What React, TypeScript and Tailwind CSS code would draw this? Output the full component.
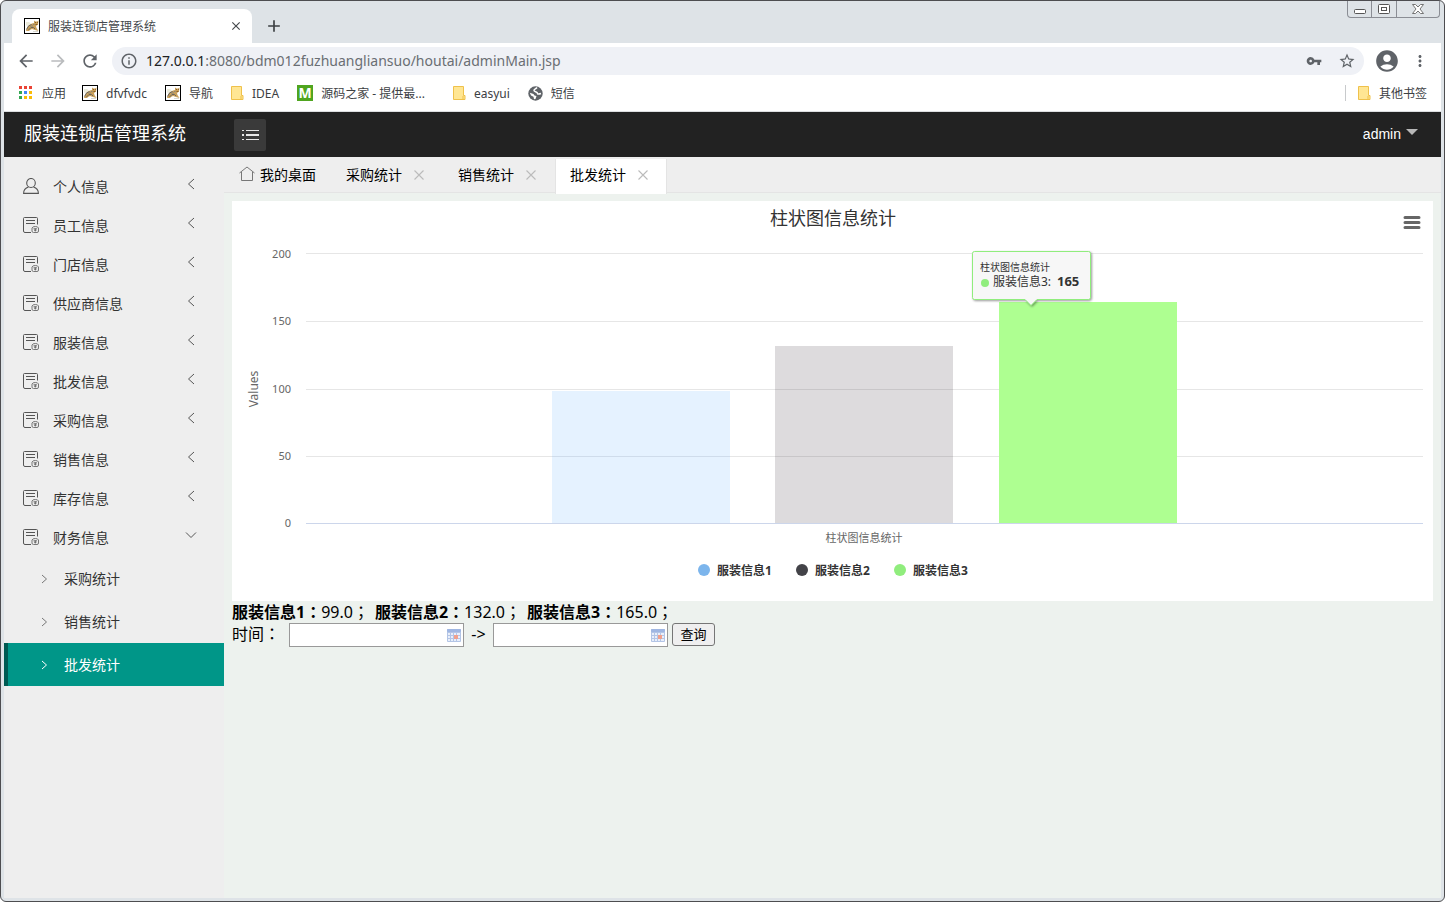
import React, { useState } from 'react';
import {
  MdArrowBack,
  MdArrowForward,
  MdRefresh,
  MdInfoOutline,
  MdVpnKey,
  MdStarBorder,
  MdAccountCircle,
  MdMoreVert,
  MdClose,
  MdAdd,
} from 'react-icons/md';

const menus = ['个人信息', '员工信息', '门店信息', '供应商信息', '服装信息', '批发信息', '采购信息', '销售信息', '库存信息', '财务信息'];

const subMenus = ['采购统计', '销售统计', '批发统计'];

const tabs = ['采购统计', '销售统计', '批发统计'];

const series = [
  { name: '服装信息1', value: 99, color: '#7cb5ec', fill: '#e5f2ff', x: 320 },
  { name: '服装信息2', value: 132, color: '#434348', fill: '#dddbdd', x: 543 },
  { name: '服装信息3', value: 165, color: '#90ed7d', fill: '#aeff91', x: 767 },
];

const ticks = [
  { label: '200', y: 52 },
  { label: '150', y: 120 },
  { label: '100', y: 188 },
  { label: '50', y: 255 },
];

const appColors = [
  '#ea4335', '#ea4335', '#ea4335',
  '#34a853', '#4285f4', '#fbbc05',
  '#34a853', '#fbbc05', '#fbbc05',
];

/* ---------- icons ---------- */

const TomcatIcon = () => (
  <svg width="16" height="16" viewBox="0 0 16 16" className="shrink-0">
    <rect x="0.5" y="0.5" width="15" height="15" fill="#fff" stroke="#000" />
    <path d="M2 4 H5 L7 5.5 L4 8 L2 7.5 Z" fill="#ececdc" />
    <path d="M2 13 L3 10 L5 7 L8 5.5 L10 5 L10 2.5 L11.5 3.5 L13 3.5 L14.5 2.5 L14 6.5 L12 8 L12.5 10 L14.5 13 L11 12 L8 11 L6 12 L5 13 Z" fill="#c9a05a" />
    <path d="M2.5 11.5 L4.5 8 L7.5 6.5 M4.5 12 L7 9.5 L9.5 9.5 L11 11" stroke="#6b655c" fill="none" />
    <path d="M6 8 H9 M9 6.5 H10.5" stroke="#8b8578" />
    <path d="M11 4.5 h1 M13 4.5 h0.8 M11.5 6.5 h2" stroke="#7a4b12" strokeWidth="0.8" />
    <path d="M9 13.5 H14" stroke="#d8d8d0" />
  </svg>
);

const FolderIcon = () => (
  <svg width="13" height="15" viewBox="0 0 13 15" className="shrink-0">
    <path d="M0.5 0.5 H10.5 V9.5 H12 V13.5 H0.5 Z" fill="#ffe693" stroke="#efc14b" />
    <path d="M10 13.5 V10" stroke="#efc14b" />
  </svg>
);

const GlobeIcon = () => (
  <svg width="15" height="15" viewBox="0 0 15 15" className="shrink-0">
    <circle cx="7.5" cy="7.5" r="7.2" fill="#5f6368" />
    <path d="M9 1.5 C8 3 6 3 6 4.5 C6 6 9.5 5.5 9.5 7.5 C9.5 8.5 11.5 8 13 7.5" fill="none" stroke="#fff" strokeWidth="1.5" />
    <path d="M1.8 6.8 L5.5 8 L6.5 9.5 L8.5 10 L7.5 13 L6 13.2 L5.5 10.8 L3 9.5 Z" fill="#fff" />
  </svg>
);

const UserIcon = () => (
  <svg width="16" height="16" viewBox="0 0 16 16" fill="none" stroke="#555" strokeWidth="1.1">
    <ellipse cx="8" cy="5" rx="4.3" ry="4.5" />
    <path d="M5.5 9 C2.5 10 0.6 12.5 0.6 15.4 H15.4 C15.4 12.5 13.5 10 10.5 9" />
  </svg>
);

const FormIcon = () => (
  <svg width="16" height="16" viewBox="0 0 16 16" fill="none" stroke="#555">
    <path d="M14.5 7.5 V1.5 Q14.5 0.5 13.5 0.5 H1.5 Q0.5 0.5 0.5 1.5 V14 Q0.5 15.5 2 15.5 H8" />
    <path d="M3 3.5 H12 M3 6.5 H12" />
    <path d="M9 11 Q9.5 9.5 12.3 9.5 Q15 9.5 15.5 11 V14 Q15.5 15.5 14 15.5 H10.5 Q9 15.5 9 14 Z" stroke="#777" />
    <path d="M10.5 11.8 H14 M11 13.2 H13.5 M12.3 11.5 V14.5" strokeWidth="0.8" />
  </svg>
);

const HomeIcon = () => (
  <svg width="16" height="16" viewBox="0 0 16 16" fill="none" stroke="#777">
    <path d="M0.5 7 L8 1 L15.5 7 M2.5 6 V14.5 H13.5 V6" />
  </svg>
);

const Chevron: React.FC<{ d: string; color?: string }> = ({ d, color = '#555' }) => (
  <svg width="12" height="12" viewBox="0 0 12 12" fill="none" stroke={color} className="shrink-0">
    <path d={d} />
  </svg>
);

const CalendarIcon = () => (
  <svg width="14" height="13" viewBox="0 0 14 13" className="shrink-0">
    <rect width="14" height="13" rx="1" fill="#b3c5e6" />
    <rect width="14" height="3" rx="1" fill="#9fb6e2" />
    <path d="M1 4h2v2H1z M4 4h2v2H4z M7 4h2v2H7z M10 4h3v2h-3z M1 7h2v2H1z M4 7h2v2H4z M10 7h3v2h-3z M1 10h2v2H1z M4 10h2v2H4z M7 10h2v2H7z M10 10h3v2h-3z" fill="#e9effa" />
    <rect x="7" y="6" width="4" height="4" fill="#f0a08c" />
  </svg>
);

/* ---------- browser ---------- */

const WindowButtons = () => (
  <div className="flex h-[17px] mr-px border border-t-0 border-[#8a8d94] rounded-b divide-x divide-[#8a8d94]">
    <button aria-label="Minimize" className="w-6 flex justify-center items-center">
      <svg width="12" height="12" viewBox="0 0 12 12"><rect x="0.5" y="6.5" width="11" height="4" rx="1" fill="#fff" stroke="#555" /></svg>
    </button>
    <button aria-label="Maximize" className="w-[25px] flex justify-center items-center">
      <svg width="12" height="10" viewBox="0 0 12 10" fill="#fff" stroke="#555"><rect x="0.5" y="0.5" width="11" height="9" rx="1" /><rect x="3.5" y="3.5" width="5" height="3" /></svg>
    </button>
    <button aria-label="Close" className="w-[42px] flex justify-center items-center">
      <svg width="12" height="10" viewBox="0 0 12 10" fill="#fff" stroke="#666" strokeWidth="0.9">
        <path d="M0.5 0.5 H3.5 L6 3 L8.5 0.5 H11.5 L8 5 L11.5 9.5 H8.5 L6 7 L3.5 9.5 H0.5 L4 5 Z" />
      </svg>
    </button>
  </div>
);

const TabStrip = () => (
  <div className="flex items-start justify-between h-[42px] pl-2">
    <div className="flex items-center mt-2">
      <div className="flex items-center w-60 h-[34px] px-3 bg-white rounded-t-lg">
        <TomcatIcon />
        <span className="ml-2 pt-[2px] text-xs text-[#45494d]">服装连锁店管理系统</span>
        <button aria-label="Close tab" className="ml-auto -mr-[3px] text-[#45494d]"><MdClose size={14} /></button>
      </div>
      <button aria-label="New tab" className="ml-3 text-[#3c4043]"><MdAdd size={20} /></button>
    </div>
    <WindowButtons />
  </div>
);

const Toolbar = () => (
  <div className="flex items-center h-9 pl-3 pr-3 bg-white text-[#5f6368]">
    <button aria-label="Back"><MdArrowBack size={20} /></button>
    <button aria-label="Forward" className="ml-3 text-[#babcbe]"><MdArrowForward size={20} /></button>
    <button aria-label="Reload" className="ml-3"><MdRefresh size={20} /></button>
    <div className="flex items-center flex-1 h-7 ml-3 px-2 bg-[#eff1f6] rounded-full">
      <MdInfoOutline size={18} />
      <div className="flex-1 ml-2 text-sm text-[#6a6e73]">
        <span className="text-[#202124]">127.0.0.1</span>:8080/bdm012fuzhuangliansuo/houtai/adminMain.jsp
      </div>
      <button aria-label="Passwords"><MdVpnKey size={16} /></button>
      <button aria-label="Bookmark" className="ml-4"><MdStarBorder size={18} /></button>
    </div>
    <button aria-label="Profile" className="ml-[10px]"><MdAccountCircle size={26} /></button>
    <button aria-label="Menu" className="ml-[11px]"><MdMoreVert size={18} /></button>
  </div>
);

const Bookmark: React.FC<{ icon: React.ReactNode; label: string; className?: string }> = ({ icon, label, className = '' }) => (
  <a href="#" className={`flex items-center gap-2 whitespace-nowrap ${className}`}>
    {icon}
    <span className="pt-[2px]">{label}</span>
  </a>
);

const BookmarkBar = () => (
  <nav className="flex items-center h-[33px] px-[14px] pb-1 bg-white border-b border-[#dcdee0] text-xs text-[#3c4043]">
    <Bookmark
      label="应用"
      icon={
        <svg width="16" height="16" viewBox="0 0 16 16" className="shrink-0">
          {appColors.map((c, i) => (
            <rect key={i} x={1 + (i % 3) * 5} y={1 + Math.floor(i / 3) * 5} width="3" height="3" fill={c} />
          ))}
        </svg>
      }
    />
    <Bookmark className="ml-4" icon={<TomcatIcon />} label="dfvfvdc" />
    <Bookmark className="ml-[18px]" icon={<TomcatIcon />} label="导航" />
    <Bookmark className="ml-[18px]" icon={<FolderIcon />} label="IDEA" />
    <Bookmark
      className="ml-[18px]"
      icon={<span className="w-4 h-4 bg-[#4fa51f] text-white text-sm leading-4 font-bold text-center">M</span>}
      label="源码之家 - 提供最..."
    />
    <Bookmark className="ml-7" icon={<FolderIcon />} label="easyui" />
    <Bookmark className="ml-[18px]" icon={<GlobeIcon />} label="短信" />
    <div className="ml-auto w-px h-4 bg-[#c8cacc]"></div>
    <Bookmark className="ml-3" icon={<FolderIcon />} label="其他书签" />
  </nav>
);

/* ---------- admin page ---------- */

const Header = () => (
  <header className="flex items-center h-[45px] pl-5 pr-[23px] bg-[#222] text-white">
    <h1 className="w-[210px] pb-1 text-lg leading-none">服装连锁店管理系统</h1>
    <button aria-label="Toggle menu" className="flex items-center justify-center w-8 h-8 bg-[#3a3a3a] rounded-xs">
      <svg width="18" height="12" viewBox="0 0 18 12" stroke="#e8e8e8">
        <path d="M1 1.5 H3 M5 1.5 H18 M1 10.5 H3 M5 10.5 H18" />
        <path d="M1 6 H3 M5 6 H18" strokeWidth="2" />
      </svg>
    </button>
    <button className="flex items-center gap-[5px] ml-auto pb-[2px] font-['Liberation_Sans',sans-serif] text-sm">
      admin
      <span className="mb-1 border-x-6 border-x-transparent border-t-6 border-t-[#b8b8b8]"></span>
    </button>
  </header>
);

const Sidebar = () => {
  const [current, setCurrent] = useState('批发统计');

  return (
    <aside className="w-[220px] shrink-0 pt-[10px] bg-[#eee] text-sm text-[#333]">
      {menus.map((item, i) => (
        <button key={item} className="flex items-center w-full h-[39px] pl-[19px] pr-[27px]">
          <span className="mb-[2px]">{i === 0 ? <UserIcon /> : <FormIcon />}</span>
          <span className="ml-[14px] mr-auto">{item}</span>
          <span className="mb-[6px]">
            <Chevron d={i === menus.length - 1 ? 'M1 3.5 L6 8.5 L11 3.5' : 'M9 1 L3.5 6 L9 11'} />
          </span>
        </button>
      ))}
      {subMenus.map((item) => (
        <button
          key={item}
          onClick={() => setCurrent(item)}
          className={`flex items-center w-full h-[43px] pl-[30px] gap-[14px] border-l-4 ${
            item === current ? 'bg-[#009688] border-[#005a52] text-white' : 'border-transparent'
          }`}
        >
          <Chevron d="M4 2 L8.5 6 L4 10" color={item === current ? '#fff' : '#777'} />
          {item}
        </button>
      ))}
    </aside>
  );
};

const TabBar = () => (
  <div className="flex h-9 pt-[2px] bg-[#eee] border-b border-[#e4e4e4] text-sm text-black">
    <button className="flex items-center gap-[5px] h-8 px-[15px]">
      <span className="pb-[2px]"><HomeIcon /></span>
      我的桌面
    </button>
    {tabs.map((tab, i) => (
      <div
        key={tab}
        className={`flex items-center w-28 px-[14px] border-x ${
          i === 2 ? 'h-[35px] pb-[3px] bg-white border-[#e4e4e4]' : 'h-8 border-transparent'
        }`}
      >
        <button>{tab}</button>
        <button aria-label={`关闭 ${tab}`} className="ml-3">
          <svg width="10" height="10" viewBox="0 0 10 10" stroke="#bbb" strokeWidth="1.1"><path d="M0.5 0.5 L9.5 9.5 M9.5 0.5 L0.5 9.5" /></svg>
        </button>
      </div>
    ))}
  </div>
);

const Chart = () => {
  // 0..200 maps onto 270px of plot height, columns have a white edge on top
  const top = (value: number) => Math.floor(324 - (value / 200) * 270);

  return (
    <section className="bg-white">
      <svg viewBox="0 0 1201 400" className="block w-full h-auto" role="img" aria-label="柱状图信息统计">
        <text x="601" y="24" textAnchor="middle" fontSize="18" fill="#333">柱状图信息统计</text>
        <path d="M1173 16.5 H1187 M1173 21.5 H1187 M1173 26.5 H1187" stroke="#666" strokeWidth="3" strokeLinecap="round" />

        {ticks.map((t) => (
          <g key={t.label}>
            <path d={`M74 ${t.y + 0.5} H1191`} stroke="#e6e6e6" />
            <text x="59" y={t.label === '200' ? 57 : t.y + 4} textAnchor="end" fontSize="11" fill="#666">{t.label}</text>
          </g>
        ))}
        <text x="59" y="326" textAnchor="end" fontSize="11" fill="#666">0</text>
        <text transform="translate(26 188) rotate(-90)" textAnchor="middle" fontSize="12" fill="#666">Values</text>

        {series.map((s) => (
          <rect key={s.name} x={s.x} y={top(s.value)} width="178" height={322 - top(s.value)} fill={s.fill} />
        ))}
        {/* grid lines stay visible through the dimmed columns */}
        <path d="M543 188.5 H721 M543 255.5 H721" stroke="#c8c6c8" />
        <path d="M320 255.5 H498" stroke="#cfdceb" />
        <path d="M74 322.5 H1191" stroke="#ccd6eb" />
        <text x="632" y="341" textAnchor="middle" fontSize="11" fill="#666">柱状图信息统计</text>

        {series.map((s, i) => (
          <g key={s.name}>
            <circle cx={472 + i * 98} cy="369" r="6" fill={s.color} />
            <text x={485 + i * 98} y="374" fontSize="12" fontWeight="bold" fill="#333">{s.name}</text>
          </g>
        ))}

        {/* tooltip */}
        <path
          d="M742.5 50.5 H856.5 Q858.5 50.5 858.5 52.5 V96.5 Q858.5 98.5 856.5 98.5 H805 L799 104.5 L793 98.5 H742.5 Q740.5 98.5 740.5 96.5 V52.5 Q740.5 50.5 742.5 50.5 Z"
          fill="#f7f7f7"
          stroke="#90ed7d"
          className="drop-shadow-[1px_1px_1px_rgba(0,0,0,0.4)]"
        />
        <text x="748" y="70" fontSize="10" fill="#333">柱状图信息统计</text>
        <circle cx="753" cy="82" r="4" fill="#90ed7d" />
        <text x="761" y="85" fontSize="12" fill="#333">服装信息3:</text>
        <text x="825" y="85" fontSize="13" fontWeight="bold" fill="#333">165</text>
      </svg>
    </section>
  );
};

// full-width punctuation centred in its cell
const Mark: React.FC<{ children: string }> = ({ children }) => (
  <span lang="zh-TW" className="font-['Noto_Sans','Noto_Sans_CJK_TC',sans-serif]">{children}</span>
);

const DateInput: React.FC<{ label: string }> = ({ label }) => (
  <span className="flex items-center w-[175px] h-6 pr-[2px] bg-white border border-[#999]">
    <input type="text" aria-label={label} className="flex-1 min-w-0 h-full px-1 text-sm outline-none" />
    <CalendarIcon />
  </span>
);

const Summary = () => (
  <div className="text-base leading-[22px] text-black">
    <p className="flex gap-[6px] whitespace-nowrap">
      {series.map((s) => (
        <span key={s.name}>
          <b>{s.name}<Mark>：</Mark></b>
          {s.value.toFixed(1)}<Mark>；</Mark>
        </span>
      ))}
    </p>
    <form className="flex items-start" onSubmit={(e) => e.preventDefault()}>
      <span className="w-[57px]">时间<Mark>：</Mark></span>
      <DateInput label="开始时间" />
      <span className="w-[29px] text-center">-&gt;</span>
      <DateInput label="结束时间" />
      <button className="w-[43px] h-[23px] ml-1 bg-[#efefef] border border-[#767676] rounded-[3px] text-[13px] leading-none">查询</button>
    </form>
  </div>
);

const App: React.FC = () => {
  return (
    <div className="flex flex-col min-h-screen px-[3px] pb-[3px] border border-[#4d4d50] rounded-md bg-[#dee3e7] font-['Noto_Sans','Noto_Sans_CJK_SC',sans-serif]">
      <TabStrip />
      <Toolbar />
      <BookmarkBar />
      <Header />
      <div className="flex flex-1">
        <Sidebar />
        <main className="flex-1 min-w-0 bg-[#edf2ee]">
          <TabBar />
          <div className="p-2">
            <Chart />
            <Summary />
          </div>
        </main>
      </div>
    </div>
  );
};

export default App;
